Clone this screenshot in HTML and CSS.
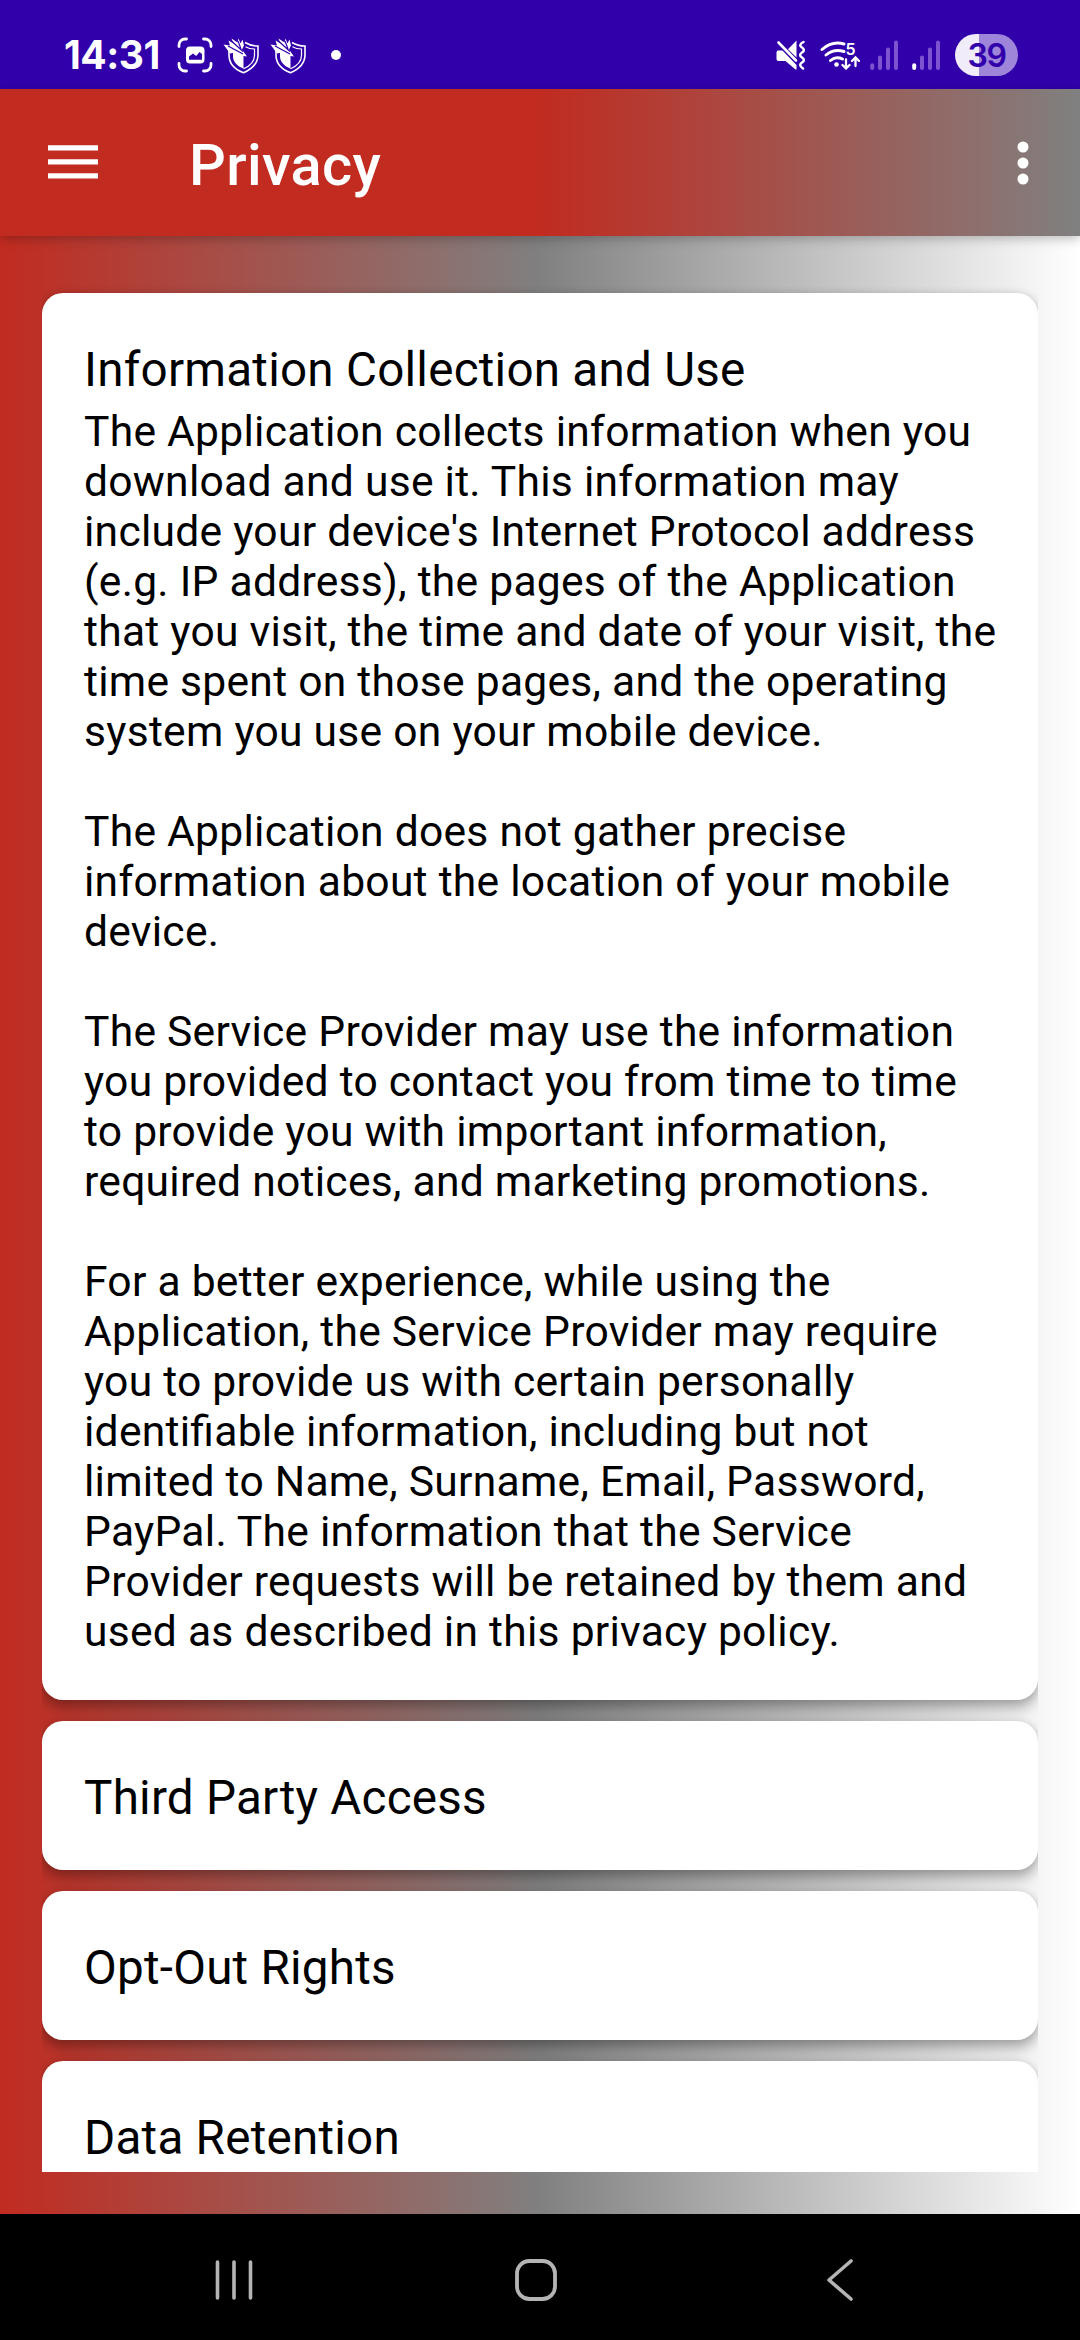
FILE: index.html
```html
<!DOCTYPE html>
<html lang="en">
<head>
<meta charset="utf-8">
<title>Privacy</title>
<link rel="stylesheet" href="styles.css">
</head>
<body>
<div class="screen">
  <div class="status-bar">
    <span class="clock">14:31</span>
    <svg class="icon-capture" viewBox="0 0 36 36" width="36" height="36" fill="none" stroke="#fff" stroke-width="2.8" stroke-linecap="round">
      <path d="M2 9.500V8a6 6 0 0 1 6-6h1.500M26.500 2H28a6 6 0 0 1 6 6v1.500M34 26.500V28a6 6 0 0 1-6 6h-1.500M9.500 34H8a6 6 0 0 1-6-6v-1.500"/>
      <rect x="9" y="9.500" width="18.500" height="17" rx="4" fill="#fff" stroke="none"/>
      <path d="M12 22.800v-3.300l4-3 3.200 2.500 3.300-4 2.500 2v5.800z" fill="#3100aa" stroke="none"/>
    </svg>
    <svg class="icon-shield" viewBox="0 0 37 37" width="37" height="37">
      <path d="M6 14v4c0 8.500 6 14.500 14.500 17.700C29 32 35 26 35 17.700V9c-5 0-9-1-13-3.500" fill="none" stroke="#fff" stroke-width="1.600"/>
      <path d="M10 14v5c0 6 4 10 10.500 12.700V17z" fill="#fff"/>
      <path d="M20.500 31.700c7-3 11-7.200 11-13.500v-6.200c-4 0-6.500-.8-9-2.300" fill="none" stroke="#fff" stroke-width="1.200"/>
      <path d="M.5 7.500l6.500 1-1.500-5 5 3-2-5 6 4 1-4 2 5 2-4 1.500 6-2 4 5 7-7-1-5-3-5 1z" fill="#fff"/>
      <path d="M5 9l15 8M9 4.500l11 10M15 4l3 8" fill="none" stroke="#3100aa" stroke-width="1.200"/>
    </svg>
    <svg class="icon-shield" viewBox="0 0 37 37" width="37" height="37">
      <path d="M6 14v4c0 8.500 6 14.500 14.500 17.700C29 32 35 26 35 17.700V9c-5 0-9-1-13-3.500" fill="none" stroke="#fff" stroke-width="1.600"/>
      <path d="M10 14v5c0 6 4 10 10.500 12.700V17z" fill="#fff"/>
      <path d="M20.500 31.700c7-3 11-7.200 11-13.500v-6.200c-4 0-6.500-.8-9-2.300" fill="none" stroke="#fff" stroke-width="1.200"/>
      <path d="M.5 7.500l6.500 1-1.500-5 5 3-2-5 6 4 1-4 2 5 2-4 1.500 6-2 4 5 7-7-1-5-3-5 1z" fill="#fff"/>
      <path d="M5 9l15 8M9 4.500l11 10M15 4l3 8" fill="none" stroke="#3100aa" stroke-width="1.200"/>
    </svg>
    <span class="more-dot"></span>
    <div class="system-icons">
      <svg class="icon-mute" viewBox="0 0 30 30" width="30" height="30">
        <path d="M1.500 10.500h5L20.500 25v4.500h-1L9.500 21h-7A2 2 0 0 1 .5 19v-7z" fill="#fff"/>
        <path d="M20.500.500v17L12 9.200z" fill="#fff"/>
        <path d="M2.500 2.500L20 20.500" stroke="#fff" stroke-width="2.600" stroke-linecap="round"/>
        <path d="M27.500 2c-4 2-4 4-1.500 5.500s2.500 3.500 0 5-2.500 3.500 0 5 2.500 3.500 0 5-2.500 3.500 1 6" fill="none" stroke="#fff" stroke-width="2.500" stroke-linecap="round"/>
      </svg>
      <svg class="icon-wifi" viewBox="0 0 40 30" width="40" height="30">
        <g fill="none" stroke="#fff" stroke-width="2.900" stroke-linecap="round">
          <path d="M2 9.500Q12 .5 24 4M6 15Q14 8.300 24 11.500M10.500 20.500Q16 15.800 22.500 19"/>
          <path d="M26 19.500V28M22.500 25l3.500 3.500 3.500-3.500M35.500 26V17.500M32 21l3.500-3.500L39 21" stroke-width="2.300"/>
        </g>
        <circle cx="16.500" cy="24.500" r="2.300" fill="#fff"/>
        <text x="25.500" y="14.500" class="wifi-label">5</text>
      </svg>
      <svg class="icon-signal" viewBox="0 0 28 30" width="28" height="30" stroke-width="4" stroke-linecap="round" stroke="#7f52cf">
        <path d="M2.200 25.200V28M10 17.500V28M18 9.500V28M26 2.500V28"/>
      </svg>
      <svg class="icon-signal" viewBox="0 0 28 30" width="28" height="30" stroke-width="4" stroke-linecap="round" stroke="#7f52cf">
        <path d="M2.200 25.200V28" stroke="#fff"/><path d="M10 17.500V28M18 9.500V28M26 2.500V28"/>
      </svg>
      <span class="battery">39</span>
    </div>
  </div>
  <header class="app-bar">
    <svg class="icon-menu" viewBox="0 0 50 34" width="50" height="34" fill="#fff"><path d="M0 .3h50v5.200H0zM0 14.300h50v5.200H0zM0 28.300h50v5.200H0z"/></svg>
    <h1 class="page-title">Privacy</h1>
    <svg class="icon-overflow" viewBox="0 0 12 44" width="12" height="44" fill="#fff"><circle cx="6" cy="6" r="5.500"/><circle cx="6" cy="22" r="5.500"/><circle cx="6" cy="38" r="5.500"/></svg>
  </header>
  <main class="content">
    <div class="card-list">
      <section class="card">
        <h2 class="card-title">Information Collection and Use</h2>
        <div class="card-body">
          <p class="card-text">The Application collects information when you<br>download and use it. This information may<br>include your device's Internet Protocol address<br>(e.g. IP address), the pages of the Application<br>that you visit, the time and date of your visit, the<br>time spent on those pages, and the operating<br>system you use on your mobile device.</p>
          <p class="card-text">The Application does not gather precise<br>information about the location of your mobile<br>device.</p>
          <p class="card-text">The Service Provider may use the information<br>you provided to contact you from time to time<br>to provide you with important information,<br>required notices, and marketing promotions.</p>
          <p class="card-text">For a better experience, while using the<br>Application, the Service Provider may require<br>you to provide us with certain personally<br>identifiable information, including but not<br>limited to Name, Surname, Email, Password,<br>PayPal. The information that the Service<br>Provider requests will be retained by them and<br>used as described in this privacy policy.</p>
        </div>
      </section>
      <section class="card"><h2 class="card-title">Third Party Access</h2></section>
      <section class="card"><h2 class="card-title">Opt-Out Rights</h2></section>
      <section class="card"><h2 class="card-title">Data Retention</h2></section>
    </div>
  </main>
  <nav class="nav-bar">
    <svg viewBox="0 0 40 42" width="40" height="42" stroke="#b4b4b4" stroke-width="3.600" stroke-linecap="round"><path d="M3.500 3v36M20 3v36M36.500 3v36"/></svg>
    <svg class="icon-home" viewBox="0 0 44 44" width="44" height="44" fill="none" stroke="#b4b4b4" stroke-width="3.800"><rect x="3" y="3" width="38" height="38" rx="12.500"/></svg>
    <svg viewBox="0 0 28 44" width="28" height="44" fill="none" stroke="#b4b4b4" stroke-width="3.600" stroke-linecap="round" stroke-linejoin="round"><path d="M25 3L3 22l22 19"/></svg>
  </nav>
</div>
</body>
</html>
```

FILE: styles.css
```css
* { box-sizing: border-box; }
body { margin: 0; font-family: Roboto, sans-serif; background: #000; }
.screen {
  width: 1080px;
  height: 2340px;
  display: flex;
  flex-direction: column;
  overflow: hidden;
}
.status-bar {
  flex: 0 0 89px;
  display: flex;
  align-items: center;
  padding: 21px 62px 0 64px;
  background: #3100aa;
  color: #fff;
}
.status-bar svg { flex: none; display: block; }
.clock {
  width: 113px;
  font: 700 39px/44px Inter, sans-serif;
  letter-spacing: -.5px;
  white-space: nowrap;
}
.icon-shield { margin-left: 10px; }
.more-dot {
  width: 10px;
  height: 10px;
  margin-left: 24px;
  border-radius: 50%;
  background: #fff;
}
.system-icons {
  display: flex;
  align-items: center;
  margin-left: auto;
}
.icon-wifi { margin-left: 14px; }
.wifi-label { font: 600 16px Inter, sans-serif; fill: #fff; }
.icon-signal { margin-left: 14px; }
.icon-wifi + .icon-signal { margin-left: 10px; }
.battery {
  width: 63px;
  height: 42px;
  margin-left: 15px;
  border-radius: 21px;
  background: linear-gradient(90deg, #f0ecfa 24px, #9f85d9 24px);
  color: #3100aa;
  font: 600 32px/43px Inter, sans-serif;
  letter-spacing: -1.5px;
  text-align: center;
}
.app-bar {
  position: relative;
  flex: 0 0 147px;
  display: flex;
  align-items: center;
  padding: 0 51px 0 48px;
  background: linear-gradient(90deg, #c12b20 50%, #808080);
  box-shadow: 0 3px 10px rgba(0, 0, 0, .24);
}
.icon-menu { margin-top: -1px; }
.page-title {
  margin: 4px 0 0 91px;
  color: #fff;
  font-size: 57.75px;
  font-weight: 500;
  line-height: 68px;
  letter-spacing: .35px;
}
.icon-overflow { margin-left: auto; }
.content {
  flex: 1;
  min-height: 0;
  padding: 0 42px 42px;
  background: linear-gradient(90deg, #c12b20, #808080 50%, #fff);
}
.card-list {
  height: 100%;
  padding-top: 57px;
  display: flex;
  flex-direction: column;
  gap: 21px;
  overflow: hidden;
}
.card {
  flex: none;
  padding: 45px 42px 39px;
  border-radius: 21px;
  background: #fff;
  color: #000;
  box-shadow: 0 8px 13px rgba(0, 0, 0, .28), 0 0 8px rgba(0, 0, 0, .12);
}
.card-title {
  margin: 0;
  font-size: 47.6px;
  font-weight: 400;
  line-height: 65px;
  letter-spacing: .24px;
  white-space: nowrap;
}
.card-body {
  display: flex;
  flex-direction: column;
  gap: 50px;
  padding: 3px 0 5px;
}
.card-text {
  margin: 0;
  font-size: 42.6px;
  line-height: 50px;
  letter-spacing: .26px;
  font-feature-settings: "liga" 1;
  white-space: nowrap;
}
.nav-bar {
  flex: 0 0 126px;
  display: flex;
  align-items: center;
  justify-content: space-between;
  padding: 6px 226px 0 214px;
  background: #000;
}
.icon-home { margin-right: 8px; }
```
